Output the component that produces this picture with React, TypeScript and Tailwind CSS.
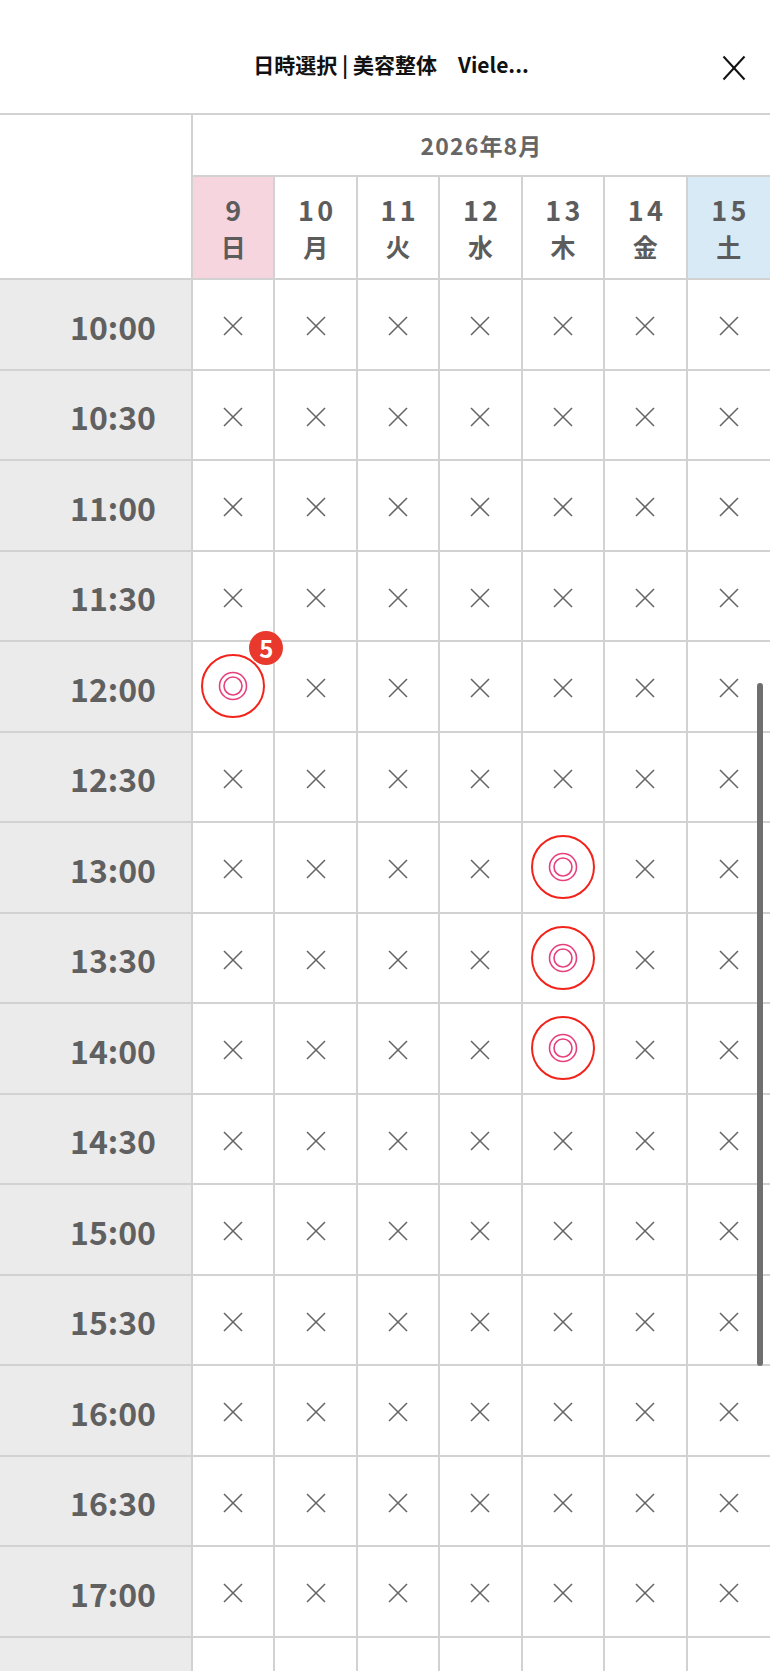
import React from 'react';

const font = "font-['Noto_Sans_CJK_JP','Noto_Sans',sans-serif]";

const days = [
  { num: '9', wd: '日', bg: 'bg-[#f7d5df]' },
  { num: '10', wd: '月', bg: 'bg-white' },
  { num: '11', wd: '火', bg: 'bg-white' },
  { num: '12', wd: '水', bg: 'bg-white' },
  { num: '13', wd: '木', bg: 'bg-white' },
  { num: '14', wd: '金', bg: 'bg-white' },
  { num: '15', wd: '土', bg: 'bg-[#d8eaf6]' },
];

// last entry is the row cut off by the bottom of the view
const times = [
  '10:00', '10:30', '11:00', '11:30', '12:00', '12:30', '13:00', '13:30',
  '14:00', '14:30', '15:00', '15:30', '16:00', '16:30', '17:00', '',
];

// open slots: "time|dayIndex" -> remaining count badge (0 = none)
const open: Record<string, number> = {
  '12:00|0': 5,
  '13:00|4': 0,
  '13:30|4': 0,
  '14:00|4': 0,
};

function Cross() {
  return (
    <svg width="20" height="20" viewBox="0 0 20 20" className="translate-y-[2px]">
      <line x1="1" y1="1" x2="19" y2="19" stroke="#666" strokeWidth="1.6" />
      <line x1="19" y1="1" x2="1" y2="19" stroke="#666" strokeWidth="1.6" />
    </svg>
  );
}

function Available() {
  return (
    <svg width="66" height="66" viewBox="0 0 66 66">
      <circle cx="33" cy="33" r="31" fill="none" stroke="#f2231b" strokeWidth="2" />
      <circle cx="33" cy="33" r="13.5" fill="none" stroke="#e6407d" strokeWidth="1.6" />
      <circle cx="33" cy="33" r="9" fill="none" stroke="#e6407d" strokeWidth="1.6" />
    </svg>
  );
}

export default function App() {
  return (
    <div className={`w-[770px] h-[1671px] overflow-hidden bg-white relative ${font}`}>
      {/* top bar */}
      <div className="h-[115px] border-b-2 border-[#d2d2d2] grid grid-cols-[1fr_auto_1fr] items-center pt-[16px]">
        <div />
        <div className="ml-3 text-[21px] font-semibold text-[#111] whitespace-pre">
          日時選択 | 美容整体　Viele...
        </div>
        <div className="flex justify-end pr-[24px]">
          <svg width="24" height="26" viewBox="0 0 24 26" className="mt-[6px]">
            <line x1="1.5" y1="1.5" x2="22.5" y2="24.5" stroke="#111" strokeWidth="2" />
            <line x1="22.5" y1="1.5" x2="1.5" y2="24.5" stroke="#111" strokeWidth="2" />
          </svg>
        </div>
      </div>

      {/* date header */}
      <div className="grid grid-cols-[193px_repeat(7,minmax(0,1fr))]">
        <div className="row-span-2 border-r-2 border-b-2 border-[#d2d2d2]" />
        <div className="col-span-7 h-[62px] border-b-2 border-[#d2d2d2] flex items-center justify-center text-[23px] font-semibold text-[#666] tracking-[0.05em]">
          2026年8月
        </div>
        {days.map((d, i) => (
          <div
            key={d.num}
            className={`h-[103px] border-b-2 border-[#d2d2d2] ${i < 6 ? 'border-r-2' : ''} ${d.bg} flex flex-col items-center justify-center text-[#5c5c5c] font-semibold`}
          >
            <span className="text-[27px] leading-[37px] tracking-[0.12em] pl-[0.12em]">{d.num}</span>
            <span className="text-[25px] leading-[37px]">{d.wd}</span>
          </div>
        ))}
      </div>

      {/* time slots */}
      <div className="grid grid-cols-[193px_repeat(7,minmax(0,1fr))]">
        {times.map((t, r) => (
          <React.Fragment key={r}>
            <div className="h-[90.5px] border-r-2 border-b-2 border-[#d2d2d2] bg-[#ebebeb] flex items-center justify-end pr-[35px] pt-[3px] text-[32px] font-bold text-[#606060]">
              {t}
            </div>
            {days.map((d, i) => {
              const key = `${t}|${i}`;
              const isOpen = key in open;
              const badge = open[key];
              return (
                <div
                  key={key + r}
                  className={`relative h-[90.5px] border-b-2 border-[#d2d2d2] ${i < 6 ? 'border-r-2' : ''} bg-white flex items-center justify-center`}
                >
                  {t === '' ? null : isOpen ? <Available /> : <Cross />}
                  {badge ? (
                    <div className="absolute z-10 -top-[11px] -right-[10px] w-[34px] h-[34px] rounded-full bg-[#e8392c] text-white text-[24px] font-bold leading-none flex items-center justify-center">
                      {badge}
                    </div>
                  ) : null}
                </div>
              );
            })}
          </React.Fragment>
        ))}
      </div>

      {/* overlay scrollbar */}
      <div className="absolute left-[757px] top-[683px] w-[6px] h-[683px] rounded-full bg-[#6f6f6f]" />
    </div>
  );
}
